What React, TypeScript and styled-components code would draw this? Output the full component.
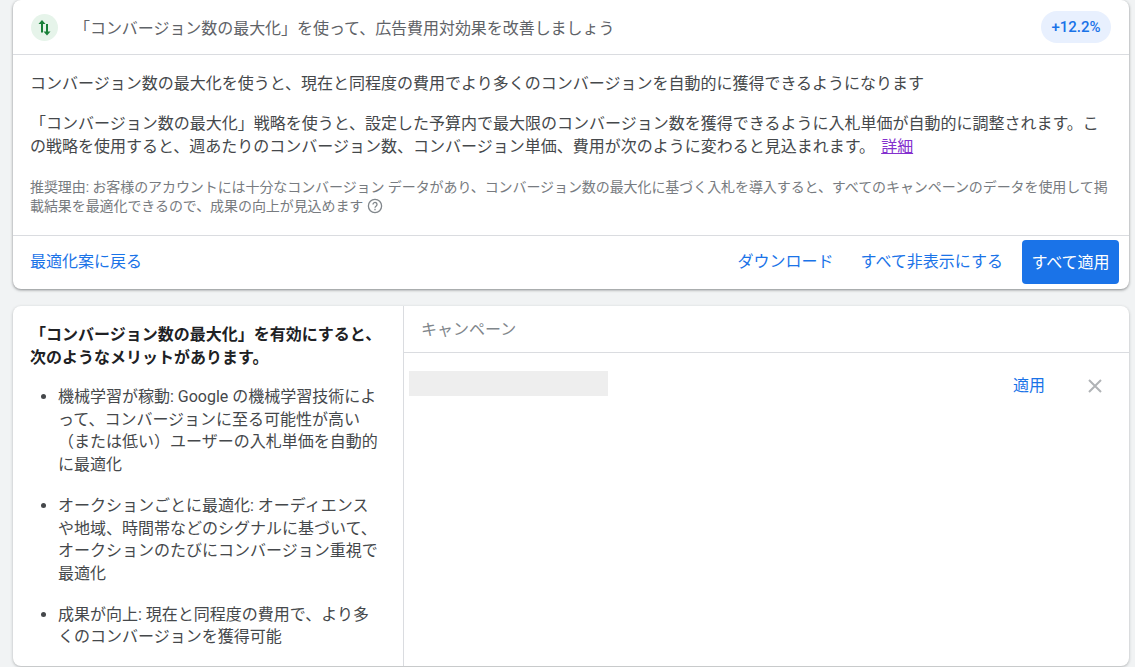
import { FC } from "react";
import styled, { createGlobalStyle } from "styled-components";

const GlobalStyle = createGlobalStyle`
  html, body {
    margin: 0;
    padding: 0;
    height: 100%;
    overflow: hidden;
    background: #fff;
  }
  * {
    box-sizing: border-box;
  }
  body {
    font-family: Roboto, "Noto Sans CJK JP", sans-serif;
    color: #3c4043;
  }
`;

const Page = styled.div`
  width: 1135px;
  height: 667px;
  overflow: hidden;
  background: #f1f3f4;
  padding-left: 13px;
  padding-right: 6px;
  display: flex;
  flex-direction: column;
  gap: 17px;
`;

const Card = styled.section`
  flex: none;
  background: #fff;
  border-radius: 8px;
  box-shadow: 0 1px 3px rgba(60, 64, 67, 0.6);
`;

const Header = styled.header`
  height: 55px;
  padding: 0 18px 0 18px;
  display: flex;
  align-items: center;
  border-bottom: 1px solid #dadce0;
`;

const IconBadge = styled.div`
  width: 27px;
  height: 27px;
  border-radius: 50%;
  background: #e6f4ea;
  flex: none;
`;

const HeaderTitle = styled.div`
  margin-left: 16px;
  flex: 1;
  font-size: 16px;
  letter-spacing: -0.05px;
  color: #5f6368;
`;

const Uplift = styled.div`
  width: 70px;
  height: 32px;
  border-radius: 16px;
  background: #e8f0fe;
  color: #1a73e8;
  font-size: 15px;
  font-weight: 500;
  display: flex;
  align-items: center;
  justify-content: center;
`;

const Body = styled.div`
  padding: 17px 17px 0 17px;
`;

const Lead = styled.p<{ $tight?: boolean }>`
  margin: 0 0 16px;
  font-size: 16px;
  line-height: ${(p) => (p.$tight ? 23 : 24)}px;
  color: #45484b;
`;

const DetailLink = styled.a`
  color: #8430ce;
  text-decoration: underline;
  margin-left: 6px;
`;

const Reason = styled.p`
  margin: 0;
  padding-top: 4px;
  padding-bottom: 19px;
  font-size: 14px;
  line-height: 19px;
  letter-spacing: -0.08px;
  color: #777b80;
`;

const Footer = styled.footer`
  height: 54px;
  padding: 0 10px 1px 17px;
  display: flex;
  align-items: center;
  border-top: 1px solid #dadce0;
`;

const TextButton = styled.a<{ $gap?: number }>`
  font-size: 16px;
  color: #1a73e8;
  margin-bottom: 5px;
  margin-left: ${(p) => p.$gap ?? 0}px;
`;

const Spacer = styled.div`
  flex: 1;
`;

const PrimaryButton = styled.button`
  margin-left: 19px;
  width: 97px;
  height: 44px;
  border: none;
  border-radius: 4px;
  background: #1a73e8;
  color: #fff;
  font-family: inherit;
  font-size: 16px;
  padding: 0 0 2px;
`;

const SplitCard = styled(Card)`
  height: 360px;
  display: flex;
  overflow: hidden;
  box-shadow: 0 1px 3px rgba(60, 64, 67, 0.35);
`;

const Side = styled.aside`
  width: 391px;
  flex: none;
  padding: 18px 24px 0 17px;
  border-right: 1px solid #dadce0;
`;

const SideTitle = styled.h2`
  margin: 0 -10px 0 0;
  font-size: 16px;
  line-height: 22.5px;
  font-weight: 700;
  color: #202124;
`;

const BenefitList = styled.ul`
  margin: 17px 0 0;
  padding: 0 0 0 28px;
`;

const Benefit = styled.li`
  font-size: 16px;
  line-height: 22.7px;
  color: #45484b;
  margin-bottom: 18px;
`;

const Main = styled.div`
  flex: 1;
  min-width: 0;
`;

const ColumnHead = styled.div`
  height: 47px;
  padding: 0 0 2px 17px;
  display: flex;
  align-items: center;
  font-size: 16px;
  color: #80868b;
  border-bottom: 1px solid #dadce0;
`;

const Row = styled.div`
  padding: 18px 26px 0 5px;
  display: flex;
  align-items: flex-start;
`;

const Redacted = styled.div`
  width: 199px;
  height: 25px;
  background: #eeeeee;
`;

const RowAction = styled.a`
  margin-left: auto;
  font-size: 16px;
  line-height: 30px;
  color: #1a73e8;
`;

const Dismiss = styled.svg`
  margin-left: 42px;
  margin-top: 7px;
  flex: none;
`;

const HelpIcon = styled.svg`
  vertical-align: -3px;
  margin-left: 4px;
`;

const SwapIcon: FC = () => (
  <svg width="27" height="27" viewBox="0 0 27 27">
    <path d="M11 18.5V9" stroke="#188038" strokeWidth="2" fill="none" />
    <path d="M7.5 10L11 6l3.5 4z" fill="#188038" />
    <path d="M16 10v8" stroke="#188038" strokeWidth="2" fill="none" />
    <path d="M12.5 17.5l3.5 4 3.5-4z" fill="#188038" />
  </svg>
);

const App: FC = () => (
  <Page>
    <GlobalStyle />
    <Card>
      <Header>
        <IconBadge>
          <SwapIcon />
        </IconBadge>
        <HeaderTitle>「コンバージョン数の最大化」を使って、広告費用対効果を改善しましょう</HeaderTitle>
        <Uplift>+12.2%</Uplift>
      </Header>
      <Body>
        <Lead>コンバージョン数の最大化を使うと、現在と同程度の費用でより多くのコンバージョンを自動的に獲得できるようになります</Lead>
        <Lead $tight>
          「コンバージョン数の最大化」戦略を使うと、設定した予算内で最大限のコンバージョン数を獲得できるように入札単価が自動的に調整されます。この戦略を使用すると、週あたりのコンバージョン数、コンバージョン単価、費用が次のように変わると見込まれます。
          <DetailLink>詳細</DetailLink>
        </Lead>
        <Reason>
          推奨理由: お客様のアカウントには十分なコンバージョン データがあり、コンバージョン数の最大化に基づく入札を導入すると、すべてのキャンペーンのデータを使用して掲載結果を最適化できるので、成果の向上が見込めます
          <HelpIcon width="16" height="16" viewBox="0 0 16 16" fill="none" stroke="#80868b" strokeWidth="1.3">
            <circle cx="8" cy="8" r="6.6" />
            <path d="M6 6.4a2 2 0 1 1 3.2 1.6c-.8.6-1.2 1-1.2 1.8M8 10.8v1.4" />
          </HelpIcon>
        </Reason>
      </Body>
      <Footer>
        <TextButton>最適化案に戻る</TextButton>
        <Spacer />
        <TextButton>ダウンロード</TextButton>
        <TextButton $gap={27}>すべて非表示にする</TextButton>
        <PrimaryButton>すべて適用</PrimaryButton>
      </Footer>
    </Card>
    <SplitCard>
      <Side>
        <SideTitle>「コンバージョン数の最大化」を有効にすると、次のようなメリットがあります。</SideTitle>
        <BenefitList>
          <Benefit>機械学習が稼動: Google の機械学習技術によって、コンバージョンに至る可能性が高い（または低い）ユーザーの入札単価を自動的に最適化</Benefit>
          <Benefit>オークションごとに最適化: オーディエンスや地域、時間帯などのシグナルに基づいて、オークションのたびにコンバージョン重視で最適化</Benefit>
          <Benefit>成果が向上: 現在と同程度の費用で、より多くのコンバージョンを獲得可能</Benefit>
        </BenefitList>
      </Side>
      <Main>
        <ColumnHead>キャンペーン</ColumnHead>
        <Row>
          <Redacted />
          <RowAction>適用</RowAction>
          <Dismiss width="16" height="16" viewBox="0 0 16 16" fill="none" stroke="#b0b3b6" strokeWidth="2">
            <path d="M2 2l12 12M14 2L2 14" />
          </Dismiss>
        </Row>
      </Main>
    </SplitCard>
  </Page>
);

export default App;
